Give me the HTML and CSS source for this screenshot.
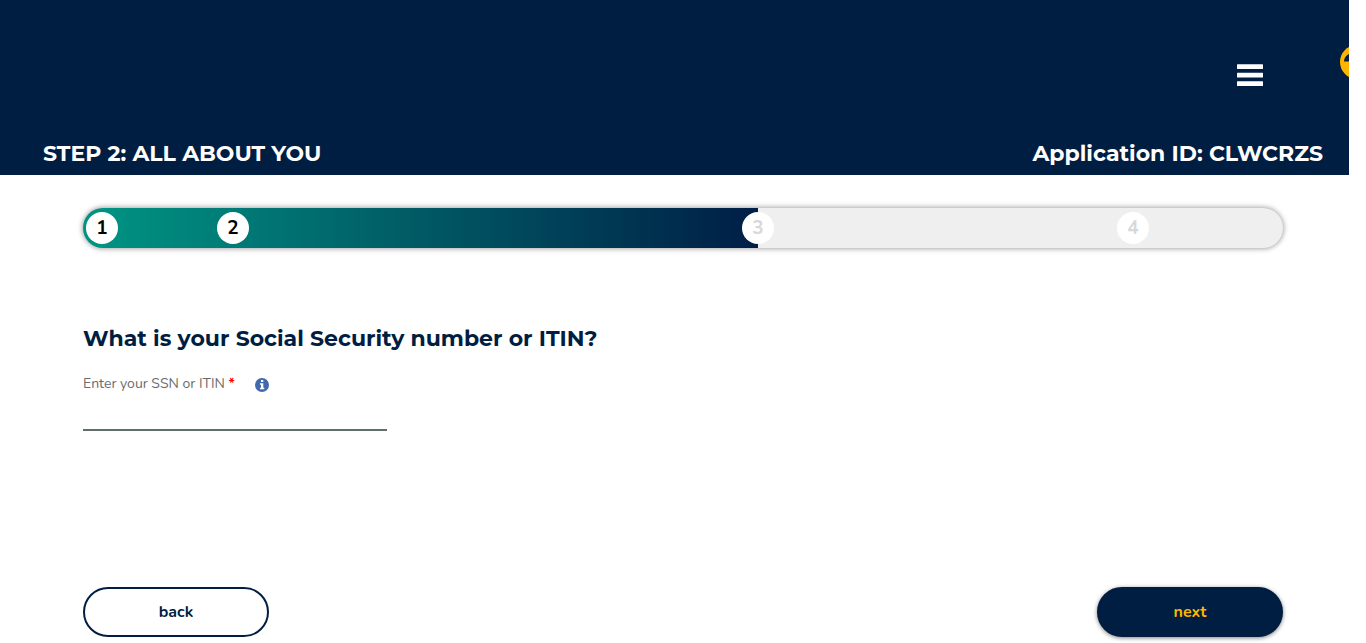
FILE: index.html
```html
<!DOCTYPE html>
<html lang="en">
<head>
<meta charset="utf-8">
<meta name="viewport" content="width=device-width, initial-scale=1">
<title>Step 2: All about you</title>
<link rel="stylesheet" href="styles.css">
</head>
<body>
<header class="header">
  <div class="header-tools">
    <button class="menu" type="button" aria-label="Menu">
      <svg width="26" height="22" viewBox="0 0 26 22" fill="#fff" aria-hidden="true"><rect y=".3" width="26" height="4.600" rx=".5"/><rect y="8.800" width="26" height="4.600" rx=".5"/><rect y="17.300" width="26" height="4.600" rx=".5"/></svg>
    </button>
    <button class="account" type="button" aria-label="Account">
      <svg width="9" height="34" viewBox="0 0 9 34" aria-hidden="true"><circle cx="17" cy="17" r="17" fill="#ffb500"/><path d="M4 16.500c0-3.500 2-6 5-7.500v7.500z" fill="#001e41"/></svg>
    </button>
  </div>
  <div class="header-titles">
    <h1 class="title">STEP 2: ALL ABOUT YOU</h1>
    <p class="title">Application ID: CLWCRZS</p>
  </div>
</header>
<main class="content">
  <ol class="progress">
    <li class="step step-first">1</li>
    <li class="step">2</li>
    <li class="step step-todo">3</li>
    <li class="step step-todo">4</li>
  </ol>
  <form class="form">
    <h2 class="question">What is your Social Security number or ITIN?</h2>
    <div class="field-head">
      <label class="label" for="ssn">Enter your SSN or ITIN <span class="required">*</span></label>
      <button class="info" type="button" aria-label="More information">
        <svg width="14" height="14" viewBox="0 0 14 14" aria-hidden="true"><circle cx="7" cy="7" r="7" fill="#4169ad"/><path d="M6 2h2.300v2H6zM5 5.300h3.300v4.500H9.300v1.400H5V9.800h1V6.700H5z" fill="#fff"/></svg>
      </button>
    </div>
    <input class="ssn" id="ssn" type="text">
    <div class="actions">
      <button class="button" type="button">back</button>
      <button class="button button-next" type="submit">next</button>
    </div>
  </form>
</main>
</body>
</html>
```
FILE: styles.css
```css
* {
  box-sizing: border-box;
}

body {
  margin: 0;
  padding-right: 17px;
  background: #fff;
  color: #001e41;
  font-family: Nunito, "Noto Sans", sans-serif;
}

button {
  border: 0;
  padding: 0;
  background: none;
  cursor: pointer;
}

svg {
  display: block;
}

.header {
  background: #001e41;
  color: #fff;
  padding-top: 45px;
}

.header-tools {
  display: flex;
  justify-content: flex-end;
  align-items: flex-start;
  gap: 77px;
}

.menu {
  padding-top: 19px;
}

.header-titles {
  display: flex;
  justify-content: space-between;
  gap: 24px;
  padding: 48px 26px 1px 43px;
}

.title {
  margin: 0;
  font: 700 22px/40px Montserrat, Inter, sans-serif;
}

.content {
  padding: 33px 66px 0 83px;
}

.progress {
  display: grid;
  grid-template-columns: 12.5% 43.75% 31.25% 12.5%;
  align-items: center;
  height: 40px;
  margin: 0;
  padding: 0;
  list-style: none;
  border-radius: 20px;
  background: linear-gradient(90deg, #009282 3%, #001e46) 0 0 / 56.25% 100% no-repeat #efefef;
  box-shadow: 0 0 5px 1px rgba(0, 0, 0, .35);
}

.step {
  width: 32px;
  height: 32px;
  margin-left: -16px;
  border-radius: 50%;
  background: #fff;
  color: #000;
  font-weight: 700;
  font-size: 19px;
  line-height: 32px;
  text-align: center;
}

.step-first {
  margin-left: 3px;
}

.step-todo {
  color: #d8d8d8;
}

.question {
  margin: 75px 0 0;
  font: 700 22px/32px Montserrat, Inter, sans-serif;
}

.field-head {
  display: flex;
  align-items: center;
  gap: 20px;
  margin-top: 17px;
}

.label {
  color: #6b6b6b;
  font: 400 14px/24px Nunito, "Open Sans", sans-serif;
}

.required {
  color: #f00;
  font-weight: 700;
}

.info {
  padding-top: 2px;
}

.ssn {
  display: block;
  width: 304px;
  max-width: 100%;
  height: 35px;
  border: 0;
  border-bottom: 2px solid #5e6f6c;
  padding: 0;
  background: none;
  font: inherit;
}

.actions {
  display: flex;
  justify-content: space-between;
  margin-top: 156px;
  padding-bottom: 6px;
}

.button {
  width: 186px;
  height: 50px;
  border: 2px solid #001e41;
  border-radius: 25px;
  color: #001e41;
  font: 700 16px/20px Nunito, "Noto Sans", sans-serif;
}

.button-next {
  background: #001e41;
  color: #ffb500;
  box-shadow: 0 1px 4px rgba(0, 0, 0, .5);
}
```
